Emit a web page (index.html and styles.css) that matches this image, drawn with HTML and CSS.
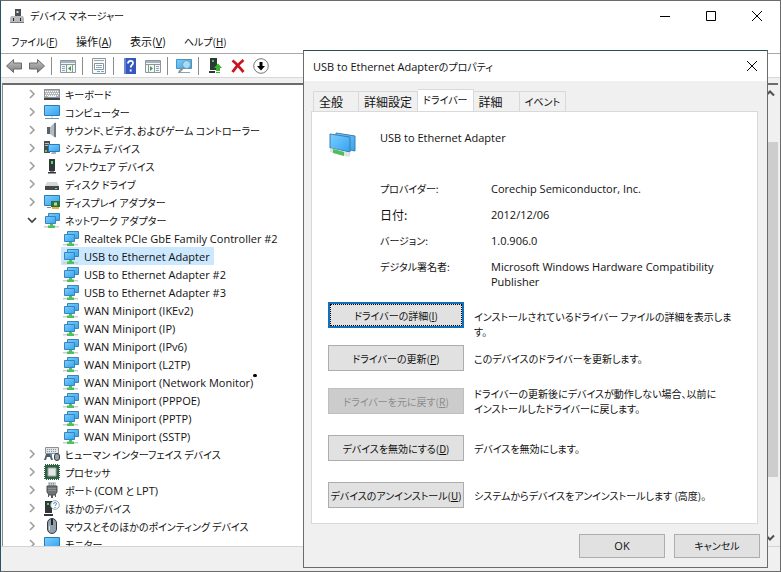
FILE: index.html
```html
<!DOCTYPE html>
<html lang="ja">
<head>
<meta charset="utf-8">
<title>デバイス マネージャー</title>
<link rel="stylesheet" href="styles.css">
</head>
<body>
<svg class="defs" aria-hidden="true">
  <defs>
    <linearGradient id="blue" x1="0" y1="0" x2="1" y2="1"><stop offset="0" stop-color="#7ccfff"/><stop offset="1" stop-color="#35a2ee"/></linearGradient>
    <linearGradient id="grey" x1="0" y1="0" x2="0" y2="1"><stop offset="0" stop-color="#c4c4c4"/><stop offset="1" stop-color="#7c7c7c"/></linearGradient>
  </defs>
  <symbol id="chev" viewBox="0 0 10 10"><path d="M3 1l4 4-4 4" fill="none" stroke="#a0a0a0" stroke-width="1.600"/></symbol>
  <symbol id="open" viewBox="0 0 10 10"><path d="M1 3l4 4 4-4" fill="none" stroke="#404040" stroke-width="1.700"/></symbol>
  <symbol id="net" viewBox="0 0 16 16"><path d="M4.500 1.500h11v7h-11z" fill="url(#blue)" stroke="#3a84b8"/><path d="M1.500 4.500h10v7h-10z" fill="url(#blue)" stroke="#3a84b8"/><path d="M0 14h15v1.500H0z" fill="#c9cfcf"/><path d="M6 12h3v1.500h2V16H4v-2.500h2z" fill="#4fc05a"/></symbol>
  <symbol id="keyboard" viewBox="0 0 16 16"><path d="M0 3h16v9H0z" fill="#b4b8bc"/><path d="M0 12h16v2H0z" fill="#3f4448"/><path d="M1 5.500h14M2 7.500h13M1 9.500h14" stroke="#fff" stroke-dasharray="1 1"/><path d="M.5 3.500h15v8H.5z" fill="none" stroke="#8b9196"/><path d="M4 10.500h8" stroke="#eee"/></symbol>
  <symbol id="computer" viewBox="0 0 16 16"><path d="M.5 1.500h15v10H.5z" fill="url(#blue)" stroke="#2c7bb2"/><path d="M7 12h2v1.500H7z" fill="#cde"/><path d="M1 14.500h14" stroke="#6f94ad"/></symbol>
  <symbol id="sound" viewBox="0 0 16 16"><path d="M3 5h3v7H3z" fill="#59626b"/><path d="M6 5l5-4.500v15L6 12z" fill="#b3bac0"/><path d="M10 1.500l2-1v15l-2-1z" fill="#6e777f"/></symbol>
  <symbol id="system" viewBox="0 0 16 16"><path d="M0 1h6v12H0z" fill="#454c52"/><path d="M1 3.500h4M1 5.500h4" stroke="#b7c0c7"/><path d="M1 10h2v2H1z" fill="#51d35b"/><path d="M4.500 4.500h11v7h-11z" fill="url(#blue)" stroke="#2c7bb2"/><path d="M8 12h4v2H7z" fill="#9fb6c4"/></symbol>
  <symbol id="software" viewBox="0 0 16 16"><path d="M5 1h6v12H5zM4 14h8v1.500H4z" fill="#30363a"/><path d="M7 3h2v3H7z" fill="#45e64d"/><path d="M6 13h4v1H6z" fill="#888"/></symbol>
  <symbol id="disk" viewBox="0 0 16 16"><path d="M3 6h10l2 4H1z" fill="#d4d6d8"/><path d="M1 10h14v4H1z" fill="#42474a"/><path d="M11 12h2v1h-2z" fill="#62e867"/></symbol>
  <symbol id="display" viewBox="0 0 16 16"><path d="M.5 1.500h15v10H.5z" fill="url(#blue)" stroke="#2c7bb2"/><path d="M3 13.500h4" stroke="#889"/><path d="M7 7h9v6H7z" fill="#267337"/><path d="M10 8.500h3v3h-3z" fill="#bed0b6"/><path d="M8 14h7" stroke="#e5b437" stroke-width="2"/></symbol>
  <symbol id="hid" viewBox="0 0 16 16"><path d="M1.500 1.500h13v6h-13z" fill="#e2e4e6" stroke="#8a9095"/><path d="M3 3.500h10M3 5.500h10" stroke="#8a9095" stroke-dasharray="1 1"/><path d="M0 14l2-6h5l2 6H7l-1-3H3l-1 3z" fill="#525b63"/><rect x="10.500" y="7.500" width="5" height="7" rx="2.500" fill="#98a2aa" stroke="#343a40"/><path d="M6 8h2v2H6z" fill="#2d8fd4"/></symbol>
  <symbol id="cpu" viewBox="0 0 16 16"><path d="M1 1h14v14H1z" fill="#2f6046" stroke="#2f6046" stroke-width="2" stroke-dasharray="1 1"/><path d="M1 1h14v14H1z" fill="#2f6046"/><path d="M4 4h8v8H4z" fill="#e4e6e5" stroke="#9db0a4"/></symbol>
  <symbol id="port" viewBox="0 0 16 16"><path d="M4 0h8v4H4z" fill="#ccd0d3"/><path d="M5 1.500h6M5 3h6" stroke="#888" stroke-dasharray="1 1"/><path d="M3 4h10v6l-2 3H5l-2-3z" fill="#6f7477" stroke="#4a4e51"/><path d="M4 6.500h8M4 8.500h8" stroke="#8d9295"/><path d="M7 13h2v3H7zM4 12h1v3H4zM11 12h1v3h-1z" fill="#55595c"/></symbol>
  <symbol id="other" viewBox="0 0 16 16"><path d="M1 1h7v12H1zM0 14h9v2H0z" fill="#30363a"/><path d="M3 3h2v2H3z" fill="#45e64d"/><circle cx="11" cy="5" r="4.300" fill="#fff" stroke="#98a6ad"/><path d="M9.700 4c0-2 3-1.800 2.800-.2C12.400 5 11 4.800 11 6M11 7v1" fill="none" stroke="#2584be"/></symbol>
  <symbol id="mouse" viewBox="0 0 16 16"><rect x="3.500" y=".5" width="9" height="15" rx="4.500" fill="#93a1ad" stroke="#333a41"/><path d="M8 1v6" stroke="#20262b" stroke-width="2"/><path d="M5.500 8v4" stroke="#d7dde2"/></symbol>
</svg>

<div class="window">
  <header class="titlebar">
    <svg class="appicon" viewBox="0 0 14 16"><path d="M5 1h6v7H5z" fill="#4b4f52"/><path d="M6.500 3h2v2h-2z" fill="#d8dde0"/><path d="M1 8h12l1 2v5H0v-5z" fill="#b8bbbd"/><path d="M0 14h14v1H0z" fill="#77797b"/><path d="M3 10h1v3H3zM10 10h1v3h-1z" fill="#222"/></svg>
    <h1>デバイス マネージャー</h1>
    <div class="caption">
      <button aria-label="最小化"><svg viewBox="0 0 12 12"><path d="M1 6.500h10" stroke="#000"/></svg></button>
      <button aria-label="最大化"><svg viewBox="0 0 12 12"><path d="M1.500 1.500h9v9h-9z" fill="none" stroke="#000"/></svg></button>
      <button aria-label="閉じる"><svg viewBox="0 0 12 12"><path d="M1 1l10 10M11 1L1 11" stroke="#000"/></svg></button>
    </div>
  </header>
  <nav class="menu">
    <button>ファイル(<u>F</u>)</button>
    <button class="kanji">操作(<u>A</u>)</button>
    <button class="kanji">表示(<u>V</u>)</button>
    <button>ヘルプ(<u>H</u>)</button>
  </nav>
  <div class="toolbar">
    <button aria-label="戻る"><svg viewBox="0 0 16 16"><path d="M.5 8L7.500 1.500V5H15.500v6H7.500v3.500z" fill="url(#grey)" stroke="#6a6a6a"/></svg></button>
    <button aria-label="進む"><svg viewBox="0 0 16 16"><path d="M15.500 8L8.500 1.500V5H.5v6h8v3.500z" fill="url(#grey)" stroke="#6a6a6a"/></svg></button>
    <i></i>
    <button aria-label="ツリーの表示"><svg viewBox="0 0 16 16"><path d="M.5 2.500h15v12H.5z" fill="#f4f6f7" stroke="#8c969c"/><path d="M1 4h14" stroke="#a3b2bd" stroke-width="2"/><path d="M1 6.500h14M6.500 7v7M12.500 7v7" stroke="#8c969c"/><path d="M2 8.500h3M2 10.500h3M2 12.500h3" stroke="#8fa6b8"/><path d="M11 8v5L8 10.500z" fill="#35a83b"/></svg></button>
    <i></i>
    <button aria-label="プロパティ"><svg viewBox="0 0 16 16"><path d="M1.500 .5h13v15h-13z" fill="#f7f8f9" stroke="#8d959b"/><path d="M3 2.500h10" stroke="#9aa5ad"/><path d="M3.500 5.500h9v6h-9z" fill="#fff" stroke="#8d959b"/><path d="M5 7.500h6M5 9.500h6" stroke="#8fa6b8"/><path d="M6 13.500h3M10 13.500h3" stroke="#5ab4d8"/></svg></button>
    <i></i>
    <button aria-label="ヘルプ"><svg viewBox="0 0 16 16"><path d="M2 0h12v16H2z" fill="#3558be"/><path d="M2 0h2v16H2z" fill="#6d87d8"/><path d="M6 5.500C6 2 11.500 2 11 5.300 10.700 7 8.700 7.200 8.700 9.500M8.700 11.500v2" fill="none" stroke="#fff" stroke-width="1.800"/></svg></button>
    <button aria-label="操作ウィンドウ"><svg viewBox="0 0 16 16"><path d="M.5 2.500h15v12H.5z" fill="#f4f6f7" stroke="#8c969c"/><path d="M1 4h14" stroke="#a3b2bd" stroke-width="2"/><path d="M1 6.500h14M3.500 7v7M9.500 7v7" stroke="#8c969c"/><path d="M11 8.500h3M11 10.500h3M11 12.500h3" stroke="#8fa6b8"/><path d="M5 8v5l3-2.500z" fill="#35a83b"/></svg></button>
    <i></i>
    <button aria-label="スキャン"><svg viewBox="0 0 16 16"><path d="M.5 1.500h15v9H.5z" fill="url(#blue)" stroke="#4d94bd"/><path d="M2 14.500h12" stroke="#87a4b3"/><circle cx="10.500" cy="6.500" r="4" fill="#a5dcfa" stroke="#7898aa"/><path d="M7.500 9.500L3 14" stroke="#8a8f92" stroke-width="2"/></svg></button>
    <i></i>
    <button aria-label="ドライバーの更新"><svg viewBox="0 0 16 16"><path d="M3 0h7v12H3zM2 13h6v2H2z" fill="#2c3a34"/><path d="M5 2h2v2H5z" fill="#55c06a"/><path d="M11 5.500l4 4.500h-2v3H9v-3H7z" fill="#35b52e"/><path d="M9 14.500h4" stroke="#35b52e"/></svg></button>
    <button aria-label="削除"><svg viewBox="0 0 16 16"><path d="M2.500 2.500Q7 6 13.500 14M13.500 2Q7 7 2.500 14" fill="none" stroke="#c91420" stroke-width="2.800"/></svg></button>
    <button aria-label="無効"><svg viewBox="0 0 16 16"><circle cx="8" cy="8" r="7.300" fill="#fff" stroke="#777"/><path d="M6.500 4h3v4H12l-4 4.500L4 8h2.500z" fill="#000"/></svg></button>
  </div>

  <main class="pane">
    <ul class="tree">
      <li><button aria-label="展開"><svg><use href="#chev"/></svg></button><svg class="ic"><use href="#keyboard"/></svg>キーボード</li>
      <li><button aria-label="展開"><svg><use href="#chev"/></svg></button><svg class="ic"><use href="#computer"/></svg>コンピューター</li>
      <li><button aria-label="展開"><svg><use href="#chev"/></svg></button><svg class="ic"><use href="#sound"/></svg>サウンド、ビデオ、およびゲーム コントローラー</li>
      <li><button aria-label="展開"><svg><use href="#chev"/></svg></button><svg class="ic"><use href="#system"/></svg>システム デバイス</li>
      <li><button aria-label="展開"><svg><use href="#chev"/></svg></button><svg class="ic"><use href="#software"/></svg>ソフトウェア デバイス</li>
      <li><button aria-label="展開"><svg><use href="#chev"/></svg></button><svg class="ic"><use href="#disk"/></svg>ディスク ドライブ</li>
      <li><button aria-label="展開"><svg><use href="#chev"/></svg></button><svg class="ic"><use href="#display"/></svg>ディスプレイ アダプター</li>
      <li><button aria-label="折りたたむ"><svg><use href="#open"/></svg></button><svg class="ic"><use href="#net"/></svg>ネットワーク アダプター</li>
      <li class="leaf"><span><svg class="ic"><use href="#net"/></svg>Realtek PCIe GbE Family Controller #2</span></li>
      <li class="leaf"><span class="selected"><svg class="ic"><use href="#net"/></svg>USB to Ethernet Adapter</span></li>
      <li class="leaf"><span><svg class="ic"><use href="#net"/></svg>USB to Ethernet Adapter #2</span></li>
      <li class="leaf"><span><svg class="ic"><use href="#net"/></svg>USB to Ethernet Adapter #3</span></li>
      <li class="leaf"><span><svg class="ic"><use href="#net"/></svg>WAN Miniport (IKEv2)</span></li>
      <li class="leaf"><span><svg class="ic"><use href="#net"/></svg>WAN Miniport (IP)</span></li>
      <li class="leaf"><span><svg class="ic"><use href="#net"/></svg>WAN Miniport (IPv6)</span></li>
      <li class="leaf"><span><svg class="ic"><use href="#net"/></svg>WAN Miniport (L2TP)</span></li>
      <li class="leaf"><span class="marked"><svg class="ic"><use href="#net"/></svg>WAN Miniport (Network Monitor)</span></li>
      <li class="leaf"><span><svg class="ic"><use href="#net"/></svg>WAN Miniport (PPPOE)</span></li>
      <li class="leaf"><span><svg class="ic"><use href="#net"/></svg>WAN Miniport (PPTP)</span></li>
      <li class="leaf"><span><svg class="ic"><use href="#net"/></svg>WAN Miniport (SSTP)</span></li>
      <li><button aria-label="展開"><svg><use href="#chev"/></svg></button><svg class="ic"><use href="#hid"/></svg>ヒューマン インターフェイス デバイス</li>
      <li><button aria-label="展開"><svg><use href="#chev"/></svg></button><svg class="ic"><use href="#cpu"/></svg>プロセッサ</li>
      <li><button aria-label="展開"><svg><use href="#chev"/></svg></button><svg class="ic"><use href="#port"/></svg>ポート&nbsp;<span class="latin">(COM</span>&nbsp;と&nbsp;<span class="latin">LPT)</span></li>
      <li><button aria-label="展開"><svg><use href="#chev"/></svg></button><svg class="ic"><use href="#other"/></svg>ほかのデバイス</li>
      <li><button aria-label="展開"><svg><use href="#chev"/></svg></button><svg class="ic"><use href="#mouse"/></svg>マウスとそのほかのポインティング デバイス</li>
      <li><button aria-label="展開"><svg><use href="#chev"/></svg></button><svg class="ic"><use href="#computer"/></svg>モニター</li>
    </ul>
    <div class="scroll">
      <svg viewBox="0 0 10 10"><path d="M1 7l4-4 4 4" fill="none" stroke="#505050" stroke-width="2"/></svg>
      <div class="track"><div class="thumb"></div></div>
      <svg viewBox="0 0 10 10"><path d="M1 3l4 4 4-4" fill="none" stroke="#505050" stroke-width="2"/></svg>
    </div>
  </main>
  <footer class="status"></footer>
</div>

<section class="dialog" role="dialog" aria-labelledby="dt">
  <header class="dtitle">
    <h2 id="dt"><span class="latin">USB to Ethernet Adapter</span>のプロパティ</h2>
    <button aria-label="閉じる"><svg viewBox="0 0 12 12"><path d="M1 1l10 10M11 1L1 11" stroke="#000"/></svg></button>
  </header>
  <div class="tabs" role="tablist">
    <button role="tab" class="kanji">全般</button>
    <button role="tab" class="kanji">詳細設定</button>
    <button role="tab" class="active" aria-selected="true">ドライバー</button>
    <button role="tab" class="kanji">詳細</button>
    <button role="tab">イベント</button>
  </div>
  <div class="panel">
    <div class="device">
      <svg viewBox="0 0 30 28"><path d="M8 3l19 3v15L8 17z" fill="url(#blue)" stroke="#3a7fae"/><path d="M2 4l20 3v15L2 18z" fill="url(#blue)" stroke="#3a7fae"/><path d="M2 20l20 5" stroke="#dde2e2" stroke-width="4"/><path d="M5 19l11 3v4L5 23z" fill="#4cc057"/></svg>
      <strong class="latin">USB to Ethernet Adapter</strong>
    </div>
    <dl class="info">
      <dt>プロバイダー:</dt><dd>Corechip Semiconductor, Inc.</dd>
      <dt class="kanji">日付:</dt><dd>2012/12/06</dd>
      <dt>バージョン:</dt><dd>1.0.906.0</dd>
      <dt>デジタル署名者:</dt><dd>Microsoft Windows Hardware Compatibility<br>Publisher</dd>
    </dl>
    <div class="actions">
      <button class="btn focus">ドライバーの詳細(<u>I</u>)</button><p class="top">インストールされているドライバー ファイルの詳細を表示しま<br>す。</p>
      <button class="btn">ドライバーの更新(<u>P</u>)</button><p>このデバイスのドライバーを更新します。</p>
      <button class="btn" disabled>ドライバーを元に戻す(<u>R</u>)</button><p>ドライバーの更新後にデバイスが動作しない場合、以前に<br>インストールしたドライバーに戻します。</p>
      <button class="btn">デバイスを無効にする(<u>D</u>)</button><p>デバイスを無効にします。</p>
      <button class="btn">デバイスのアンインストール(<u>U</u>)</button><p>システムからデバイスをアンインストールします (高度)。</p>
    </div>
  </div>
  <footer class="buttons">
    <button class="btn latin">OK</button>
    <button class="btn">キャンセル</button>
  </footer>
</section>
</body>
</html>
```
FILE: styles.css
```css
* { box-sizing: border-box; }

body {
  margin: 0;
  height: 100vh;
  overflow: hidden;
  background: #f0f0f0;
  color: #111;
  font: 10px/15px "Noto Sans CJK JP", sans-serif;
  font-feature-settings: "palt" 1;
  white-space: nowrap;
}

button { font: inherit; font-feature-settings: inherit; color: inherit; margin: 0; padding: 0; border: 0; background: none; white-space: nowrap; }
h1, h2, p, ul, dl, dd { margin: 0; padding: 0; font-size: inherit; font-weight: 400; }
strong { font-weight: 400; }
svg { display: block; flex: none; }
.defs { position: absolute; width: 0; height: 0; }
.latin, .leaf, dd { font-family: "Open Sans", "Noto Sans CJK JP", sans-serif; font-size: 11px; }
.kanji { font-size: 12px; }
.menu .kanji { font-size: 11px; }

.window {
  height: 100%;
  display: flex;
  flex-direction: column;
  border: 1px solid #6b6b6b;
  border-left-color: #2b5266;
}

.titlebar { display: flex; align-items: center; height: 29px; padding-left: 9px; background: #fff; }
.appicon { width: 14px; height: 16px; margin-right: 6px; }
.caption { margin-left: auto; display: flex; }
.caption button { width: 46px; height: 29px; display: grid; place-items: center; }
.caption svg, .dtitle svg { width: 12px; height: 12px; }

.menu { display: flex; gap: 18px; height: 24px; padding-left: 10px; background: #fff; border-bottom: 1px solid #a8a8a8; }

.toolbar { display: flex; align-items: center; height: 24px; padding-left: 1px; background: #fff; border-bottom: 1px solid #d8d8d8; }
.toolbar button { width: 23px; display: grid; place-items: center; }
.toolbar svg { width: 16px; height: 16px; }
.toolbar i { width: 1px; height: 18px; margin: 0 4px 0 3px; background: #8c8c8c; }

.pane { flex: 1; min-height: 0; display: flex; margin: 5px 2px 0 1px; border-top: 2px solid #6c6c6c; border-left: 1px solid #8c8c8c; background: #fff; overflow: hidden; }
.tree { flex: 1; list-style: none; overflow: hidden; }
.tree li { display: flex; align-items: center; height: 18px; padding-left: 22px; }
.tree li button { width: 14px; display: grid; place-items: center; margin-right: 5px; }
.tree li button svg { width: 10px; height: 10px; }
.tree .ic { width: 16px; height: 16px; margin-right: 5px; }
.tree .leaf { padding-left: 58px; }
.leaf > span { display: flex; align-items: center; height: 18px; padding: 0 4px 0 2px; }
.selected { background: #cce8ff; }
.marked { position: relative; }
.marked::after { content: ""; position: absolute; right: 0; top: 1px; width: 4px; height: 3px; border-radius: 2px; background: #000; }

.scroll { width: 17px; display: flex; flex-direction: column; align-items: center; background: #f0f0f0; }
.scroll svg { width: 10px; height: 17px; }
.track { flex: 1; width: 100%; padding: 40px 0 52px; }
.thumb { height: 100%; background: #cdcdcd; }
.status { height: 25px; border-top: 1px solid #d4d4d4; }

.dialog {
  position: absolute;
  left: 303px;
  right: 13px;
  top: 50px;
  bottom: 4px;
  display: flex;
  flex-direction: column;
  background: #f0f0f0;
  border: 1px solid #6b6b6b;
  border-top-color: #2b5050;
}
.dtitle { display: flex; align-items: center; justify-content: space-between; height: 30px; padding: 0 9px; background: #fff; }

.tabs { display: flex; align-items: flex-end; height: 30px; padding-left: 9px; }
.tabs button { height: 20px; min-width: 46px; padding: 0 5px; text-align: left; border: 1px solid #d9d9d9; border-bottom: 0; border-left: 0; }
.tabs button:first-child { border-left: 1px solid #d9d9d9; }
.tabs .active { height: 22px; padding-bottom: 3px; background: #fff; }

.panel { flex: 1; margin: 0 9px 0 7px; padding: 18px 16px 0; background: #fff; border: 1px solid #d9d9d9; }
.device { display: flex; height: 30px; }
.device svg { width: 30px; height: 28px; margin-right: 22px; }
.info { display: grid; grid-template-columns: 111px 1fr; gap: 11px 0; margin: 21px 0 0 52px; }
.actions { display: grid; grid-template-columns: 136px 1fr; grid-template-rows: 26px 26px 26px 34px 26px; gap: 17px 10px; align-items: center; margin-top: 13px; }
.actions .top { align-self: start; padding-top: 7px; }

.btn { height: 26px; border: 1px solid #adadad; background: #e1e1e1; }
.btn:disabled { background: #ccc; border-color: #bfbfbf; color: #8c8c8c; }
.btn.focus { border: 2px solid #1270bb; outline: 1px dotted #000; outline-offset: -3px; }

.buttons { display: flex; justify-content: flex-end; align-items: center; gap: 9px; height: 43px; padding-right: 7px; }
.buttons .btn { width: 86px; height: 24px; }
```
